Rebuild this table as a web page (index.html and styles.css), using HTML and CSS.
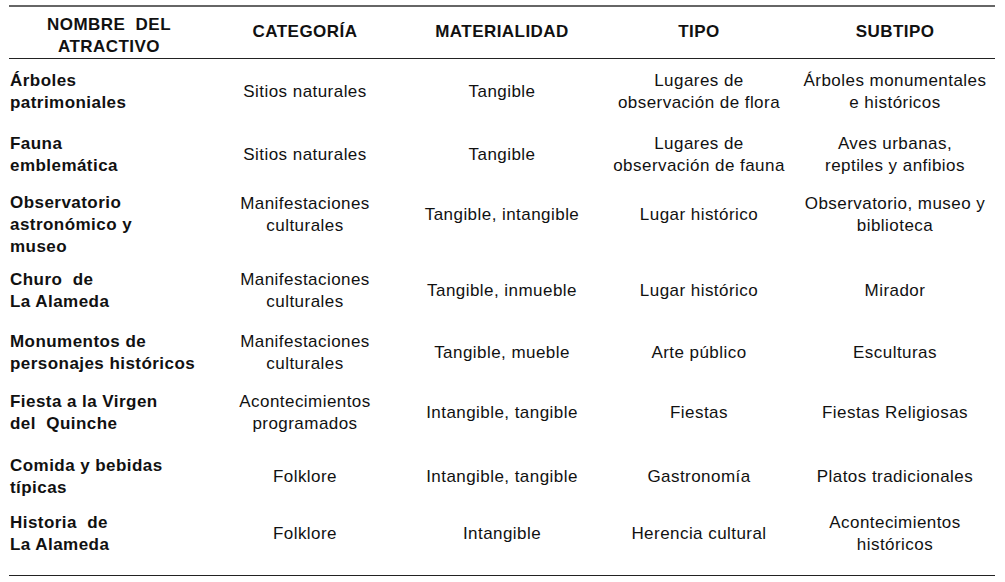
FILE: index.html
```html
<!DOCTYPE html>
<html lang="es">
<head>
<meta charset="utf-8">
<title>Atractivos</title>
<link rel="stylesheet" href="styles.css">
</head>
<body>
<table class="tbl">
<colgroup>
<col class="c1"><col class="c2"><col class="c3"><col class="c4"><col class="c5">
</colgroup>
<thead>
<tr>
<th class="hname">NOMBRE &nbsp;DEL<br>ATRACTIVO</th>
<th>CATEGORÍA</th>
<th>MATERIALIDAD</th>
<th>TIPO</th>
<th>SUBTIPO</th>
</tr>
</thead>
<tbody>
<tr class="r1">
<td class="name">Árboles<br>patrimoniales</td>
<td>Sitios naturales</td>
<td>Tangible</td>
<td>Lugares de<br>observación de flora</td>
<td>Árboles monumentales<br>e históricos</td>
</tr>
<tr class="r2">
<td class="name">Fauna<br>emblemática</td>
<td>Sitios naturales</td>
<td>Tangible</td>
<td>Lugares de<br>observación de fauna</td>
<td>Aves urbanas,<br>reptiles y anfibios</td>
</tr>
<tr class="r3">
<td class="name">Observatorio<br>astronómico y<br>museo</td>
<td>Manifestaciones<br>culturales</td>
<td>Tangible, intangible</td>
<td>Lugar histórico</td>
<td>Observatorio, museo y<br>biblioteca</td>
</tr>
<tr class="r4">
<td class="name">Churo &nbsp;de<br>La Alameda</td>
<td>Manifestaciones<br>culturales</td>
<td>Tangible, inmueble</td>
<td>Lugar histórico</td>
<td>Mirador</td>
</tr>
<tr class="r5">
<td class="name">Monumentos de<br>personajes históricos</td>
<td>Manifestaciones<br>culturales</td>
<td>Tangible, mueble</td>
<td>Arte público</td>
<td>Esculturas</td>
</tr>
<tr class="r6">
<td class="name">Fiesta a la Virgen<br>del &nbsp;Quinche</td>
<td>Acontecimientos<br>programados</td>
<td>Intangible, tangible</td>
<td>Fiestas</td>
<td>Fiestas Religiosas</td>
</tr>
<tr class="r7">
<td class="name">Comida y bebidas<br>típicas</td>
<td>Folklore</td>
<td>Intangible, tangible</td>
<td>Gastronomía</td>
<td>Platos tradicionales</td>
</tr>
<tr class="r8">
<td class="name">Historia &nbsp;de<br>La Alameda</td>
<td>Folklore</td>
<td>Intangible</td>
<td>Herencia cultural</td>
<td>Acontecimientos<br>históricos</td>
</tr>
</tbody>
</table>
</body>
</html>
```
FILE: styles.css
```css
html, body {
  margin: 0;
  padding: 0;
  background: #ffffff;
}
body {
  padding: 5px 0 0 9px;
  font-family: "Liberation Sans", Arial, sans-serif;
  color: #111111;
}
.tbl {
  border-collapse: collapse;
  width: 986px;
  table-layout: fixed;
  font-size: 17px;
  letter-spacing: 0.45px;
  line-height: 22px;
  border-top: 2px solid #666666;
  border-bottom: 1px solid #222222;
}
.c1 { width: 200px; }
.c2 { width: 192px; }
.c3 { width: 202px; }
.c4 { width: 192px; }
.c5 { width: 200px; }
th {
  font-weight: bold;
  text-align: center;
  vertical-align: middle;
  padding: 7px 0 8px;
  border-bottom: 1px solid #222222;
}
th.hname {
  padding-bottom: 0;
}
td {
  text-align: center;
  vertical-align: middle;
  padding: 0;
}
td.name {
  text-align: left;
  font-weight: bold;
  padding-left: 1px;
}

.r1 { height: 65px; }
.r1 td { padding-top: 2px; }

.r2 { height: 62px; }

.r3 { height: 76px; }
.r3 td { padding-bottom: 17px; }
.r3 td.name { padding-bottom: 0; padding-top: 3px; }

.r4 { height: 62px; }
.r4 td { padding-bottom: 3px; }

.r5 { height: 62px; }
.r5 td { padding-bottom: 3px; }

.r6 { height: 62px; }
.r6 td { padding-bottom: 7px; }

.r7 { height: 62px; }
.r7 td { padding-bottom: 4px; }

.r8 { height: 66px; }
.r8 td { padding-bottom: 16px; }
```
